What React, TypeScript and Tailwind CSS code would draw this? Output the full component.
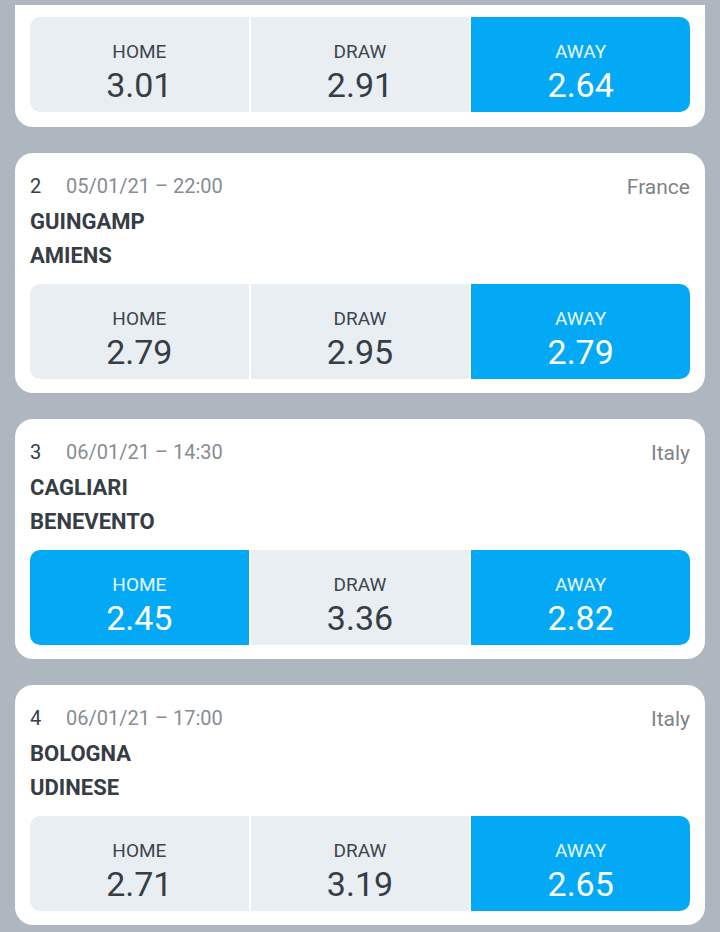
import React from "react";

type Pick = "home" | "draw" | "away";

interface Match {
  id: number;
  date: string;
  country: string;
  home: string;
  away: string;
  odds: [string, string, string];
  picks: Pick[];
}

const matches: Match[] = [
  {
    id: 2,
    date: "05/01/21 – 22:00",
    country: "France",
    home: "GUINGAMP",
    away: "AMIENS",
    odds: ["2.79", "2.95", "2.79"],
    picks: ["away"],
  },
  {
    id: 3,
    date: "06/01/21 – 14:30",
    country: "Italy",
    home: "CAGLIARI",
    away: "BENEVENTO",
    odds: ["2.45", "3.36", "2.82"],
    picks: ["home", "away"],
  },
  {
    id: 4,
    date: "06/01/21 – 17:00",
    country: "Italy",
    home: "BOLOGNA",
    away: "UDINESE",
    odds: ["2.71", "3.19", "2.65"],
    picks: ["away"],
  },
];

function OddsRow({ odds, picks }: { odds: [string, string, string]; picks: Pick[] }) {
  const cells: { key: Pick; label: string; value: string }[] = [
    { key: "home", label: "HOME", value: odds[0] },
    { key: "draw", label: "DRAW", value: odds[1] },
    { key: "away", label: "AWAY", value: odds[2] },
  ];
  return (
    <div className="flex h-[95px] gap-[2px] overflow-hidden rounded-[10px] bg-white">
      {cells.map((c) => {
        const on = picks.includes(c.key);
        return (
          <div
            key={c.key}
            className={`flex flex-1 flex-col items-center pt-[23px] ${
              on ? "bg-[#03a9f4] text-white" : "bg-[#e9eef3] text-[#363d45]"
            }`}
          >
            <span className={`text-[19px] leading-[24px] ${on ? "text-[#e8f7fe]" : "text-[#3e454d]"}`}>
              {c.label}
            </span>
            <span className="mt-[1px] text-[34px] leading-[40px]">{c.value}</span>
          </div>
        );
      })}
    </div>
  );
}

function MatchCard({ m }: { m: Match }) {
  return (
    <div className="rounded-[18px] bg-white px-[15px] pt-[15px] pb-[14px]">
      <div className="flex h-[36px] items-center justify-between">
        <div className="flex items-center text-[20px]">
          <span className="w-9 text-[#363d45]">{m.id}</span>
          <span className="text-[#878c92]">{m.date}</span>
        </div>
        <span className="mt-1 text-[21px] text-[#7e8389]">{m.country}</span>
      </div>
      <div className="mt-[1px] text-[22px] font-bold leading-[34px] text-[#363d45]">
        <div>{m.home}</div>
        <div>{m.away}</div>
      </div>
      <div className="mt-[11px]">
        <OddsRow odds={m.odds} picks={m.picks} />
      </div>
    </div>
  );
}

export default function App() {
  return (
    <div
      className="min-h-[932px] bg-[#aeb6bf] px-[15px] pt-[5px]"
      style={{ fontFamily: "Roboto, 'Noto Sans', sans-serif" }}
    >
      <div className="rounded-b-[18px] bg-white px-[15px] pt-3 pb-[15px]">
        <OddsRow odds={["3.01", "2.91", "2.64"]} picks={["away"]} />
      </div>
      <div className="mt-[26px] flex flex-col gap-[26px]">
        {matches.map((m) => (
          <MatchCard key={m.id} m={m} />
        ))}
      </div>
    </div>
  );
}
